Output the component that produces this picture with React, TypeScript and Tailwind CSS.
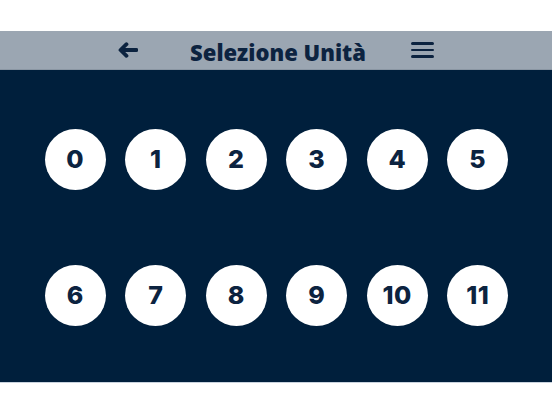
import React from 'react';

const units = [
  [0, 1, 2, 3, 4, 5],
  [6, 7, 8, 9, 10, 11],
];

const App = () => {
  return (
    <div className="w-[552px] h-[414px] bg-white flex flex-col overflow-hidden">
      <div className="h-[31px]" />

      <header className="h-[39px] bg-[#9ba6b2] flex items-center text-[#0c2340] border-b border-[#8a96a3]">
        <button className="ml-[117px] w-[21px] h-[18px] flex items-center justify-center">
          <svg width="20" height="16" viewBox="0 0 20 16" fill="none">
            <path d="M18.5 8H4" stroke="#0c2340" strokeWidth="3.8" strokeLinecap="round" />
            <path d="M8.5 2.2L2.5 8L8.5 13.8" stroke="#0c2340" strokeWidth="3.8" strokeLinecap="round" strokeLinejoin="round" />
          </svg>
        </button>
        <h1 className="ml-[52px] mt-[3px] w-[176px] text-center text-[22px] font-extrabold leading-none font-['Open_Sans',sans-serif]">
          Selezione Unità
        </h1>
        <button className="ml-[45px] w-[23px] flex flex-col gap-[4px]">
          <span className="h-[2.6px] bg-[#0c2340] rounded" />
          <span className="h-[2.6px] bg-[#0c2340] rounded" />
          <span className="h-[2.6px] bg-[#0c2340] rounded" />
        </button>
      </header>

      <main className="h-[312px] bg-[#001f3c] flex flex-col items-center pt-[59px] gap-[75px]">
        {units.map((row, i) => (
          <div key={i} className="flex gap-[19.5px] pl-[1px]">
            {row.map((n) => (
              <button
                key={n}
                className="w-[61px] h-[61px] rounded-full bg-white flex items-center justify-center text-[#0c2340] text-[25px] font-extrabold tracking-[0.5px] font-['Inter',sans-serif]"
              >
                {n}
              </button>
            ))}
          </div>
        ))}
      </main>

      <div className="flex-1 bg-white border-t border-[#c9d3de]" />
    </div>
  );
};

export default App;
